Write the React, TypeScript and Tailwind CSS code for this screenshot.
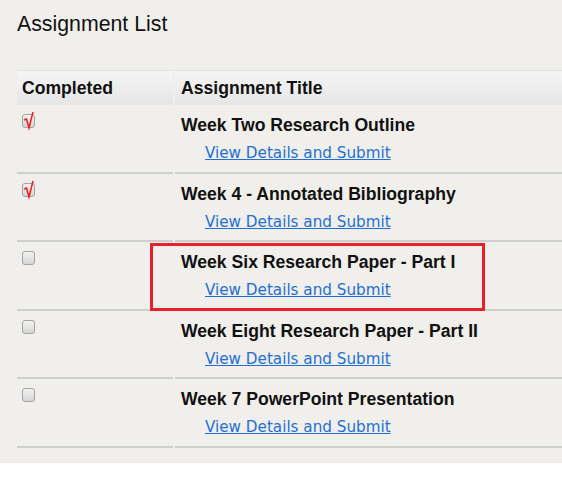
const assignments = [
  { title: 'Week Two Research Outline', done: true },
  { title: 'Week 4 - Annotated Bibliography', done: true },
  { title: 'Week Six Research Paper - Part I', done: false },
  { title: 'Week Eight Research Paper - Part II', done: false },
  { title: 'Week 7 PowerPoint Presentation', done: false },
]

function Checkbox({ checked }: { checked: boolean }) {
  return (
    <div className="relative w-[13px] h-[14px] mt-[9px] ml-[5px]">
      <div className="w-[13px] h-[14px] rounded-[3px] border border-[#a3a3a3] bg-gradient-to-b from-[#f2f2f2] to-[#d6d6d6]" />
      {checked && (
        <svg className="absolute left-[1px] top-[-3px]" width="14" height="20" viewBox="0 0 14 20">
          <path d="M1 9 L3.5 8 L6 17 L10 1" fill="none" stroke="#ee1c1c" strokeWidth="1.5" />
        </svg>
      )}
    </div>
  )
}

export default function App() {
  return (
    <div className="w-[562px] h-[480px] bg-white overflow-hidden" style={{ fontFamily: '"Liberation Sans", Arial, sans-serif' }}>
      <div className="relative h-[463px] bg-[#f0efeb]">
        <h1 className="pl-[17px] pt-[11px] text-[21.3px] leading-[26px] text-[#111]">Assignment List</h1>

        <div className="mt-[33px] ml-[17px] grid grid-cols-[156px_1fr] gap-x-[2px]">
          {/* Header */}
          <div className="h-[35px] flex items-center pl-[5px] border-t border-[#e2e2e2] bg-gradient-to-b from-[#f5f5f5] to-[#e6e6e6] text-[17.6px] font-bold text-[#111]">
            Completed
          </div>
          <div className="h-[35px] flex items-center pl-[6px] border-t border-[#e2e2e2] bg-gradient-to-b from-[#f5f5f5] to-[#e6e6e6] text-[17.6px] font-bold text-[#111]">
            Assignment Title
          </div>

          {assignments.map((a, i) => (
            <div key={i} className="contents">
              <div className="h-[68.5px] border-b-2 border-[#cfcfcf]">
                <Checkbox checked={a.done} />
              </div>
              <div className="h-[68.5px] border-b-2 border-[#cfcfcf] pl-[6px] pt-[9px]">
                <div className="text-[17.6px] leading-[22px] font-bold text-[#111]">{a.title}</div>
                <a
                  href="#"
                  className="block mt-[7px] ml-[24px] text-[15.2px] leading-[20px] text-[#1f6fd6] underline"
                  style={{ fontFamily: '"DejaVu Sans", Verdana, sans-serif' }}
                >
                  View Details and Submit
                </a>
              </div>
            </div>
          ))}
        </div>

        {/* highlight */}
        <div className="absolute left-[150px] top-[243px] w-[335px] h-[68px] border-[3px] border-[#e8202a]" />
      </div>
    </div>
  )
}
